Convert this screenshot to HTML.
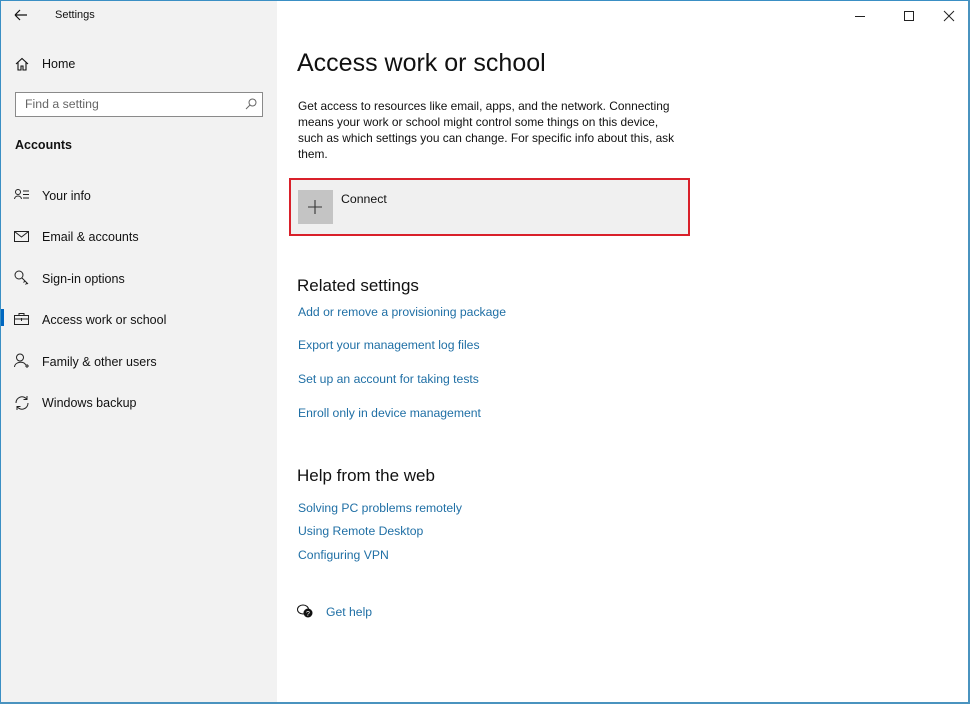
<!DOCTYPE html>
<html><head><meta charset="utf-8"><style>
*{margin:0;padding:0;box-sizing:border-box}
body{width:970px;height:704px;overflow:hidden;font-family:"Liberation Sans",sans-serif;background:#fff;position:relative;color:#000}
.side{position:absolute;left:0;top:0;width:277px;height:704px;background:#f2f2f2;border-left:1px solid #3a8fc4}
.a{position:absolute;white-space:nowrap}
.nav{font-size:12.5px;color:#111}
.lnk{font-size:12.2px;color:#1f6fa5}
svg{position:absolute}
</style></head><body>
<div class="side"></div>
<div class="a" style="left:0;top:0;width:970px;height:1px;background:#3a8fc4"></div>
<div class="a" style="left:968px;top:0;width:2px;height:704px;background:#4a93bf"></div>
<div class="a" style="left:0;top:702px;width:970px;height:2px;background:#4a93bf"></div>

<svg style="left:14px;top:9px" width="14" height="12"><path d="M1 6H13M1 6L6 1M1 6L6 11" stroke="#111" fill="none" stroke-width="1.2"/></svg>
<div class="a" style="left:55px;top:9px;font-size:11px;color:#111">Settings</div>

<svg style="left:15px;top:57px" width="14" height="14"><path d="M1 7L7 1.5L13 7M3 5.5V13H6V9H8V13H11V5.5" stroke="#111" fill="none" stroke-width="1.1"/></svg>
<div class="a nav" style="left:42px;top:57px">Home</div>

<div class="a" style="left:15px;top:92px;width:248px;height:25px;border:1px solid #8a8a8a;background:#fff"></div>
<div class="a" style="left:25px;top:97px;font-size:12.3px;color:#666">Find a setting</div>
<svg style="left:244px;top:97px" width="14" height="14"><circle cx="8.5" cy="5.5" r="3.5" stroke="#666" fill="none"/><path d="M6 8L2 12" stroke="#666"/></svg>

<div class="a" style="left:15px;top:138px;font-size:12.5px;font-weight:bold;color:#111">Accounts</div>

<svg style="left:14px;top:188px" width="16" height="14"><circle cx="4" cy="4" r="2.5" stroke="#222" fill="none"/><path d="M0.5 11C1 7 7 7 7.5 11M9 3H15M9 6.5H15M9 10H15" stroke="#222" fill="none"/></svg>
<div class="a nav" style="left:42px;top:189px">Your info</div>

<svg style="left:14px;top:231px" width="16" height="12"><rect x="0.5" y="0.5" width="14" height="10" stroke="#222" fill="none"/><path d="M0.5 0.5L7.5 6L14.5 0.5" stroke="#222" fill="none"/></svg>
<div class="a nav" style="left:42px;top:230px">Email &amp; accounts</div>

<svg style="left:14px;top:270px" width="16" height="16"><circle cx="5" cy="5" r="4" stroke="#222" fill="none"/><path d="M8 8L14 14M11 11L9.5 12.5M13 13L11.5 14.5" stroke="#222" fill="none"/></svg>
<div class="a nav" style="left:42px;top:272px">Sign-in options</div>

<div class="a" style="left:1px;top:309px;width:3px;height:17px;background:#0067c0"></div>
<svg style="left:14px;top:313px" width="16" height="12"><rect x="0.5" y="2.5" width="14" height="9" stroke="#222" fill="none"/><path d="M5 2.5V0.5H10V2.5M0.5 6H14.5M7.5 5V8" stroke="#222" fill="none"/></svg>
<div class="a nav" style="left:42px;top:313px">Access work or school</div>

<svg style="left:14px;top:353px" width="16" height="16"><circle cx="6" cy="4.5" r="3.5" stroke="#222" fill="none"/><path d="M0.5 14C1 8 11 8 11.5 12M13 11V15M11 13H15" stroke="#222" fill="none"/></svg>
<div class="a nav" style="left:42px;top:355px">Family &amp; other users</div>

<svg style="left:14px;top:395px" width="16" height="16"><path d="M2 8A6 6 0 0 1 13 4.5M14 8A6 6 0 0 1 3 11.5M13 1V4.5H9.5M3 15V11.5H6.5" stroke="#222" fill="none"/></svg>
<div class="a nav" style="left:42px;top:396px">Windows backup</div>

<svg style="left:855px;top:9px" width="100" height="14"><path d="M0 7.5H10" stroke="#222"/><rect x="49.5" y="2.5" width="9" height="9" stroke="#222" fill="none"/><path d="M89 2L99 12M99 2L89 12" stroke="#222"/></svg>

<div class="a" style="left:297px;top:49px;font-size:25px;color:#111;font-weight:300">Access work or school</div>
<div class="a" style="left:298px;top:98px;font-size:11.9px;line-height:16px;color:#111">Get access to resources like email, apps, and the network. Connecting<br>means your work or school might control some things on this device,<br>such as which settings you can change. For specific info about this, ask<br>them.</div>

<div class="a" style="left:289px;top:178px;width:401px;height:58px;border:2px solid #d9202a;background:#f0f0f0"></div>
<div class="a" style="left:298px;top:190px;width:35px;height:34px;background:#c4c4c4"></div>
<svg style="left:307px;top:199px" width="16" height="16"><path d="M8 1V15M1 8H15" stroke="#333" stroke-width="1.1"/></svg>
<div class="a" style="left:341px;top:192px;font-size:12.3px;color:#111">Connect</div>

<div class="a" style="left:297px;top:276px;font-size:17px;color:#111">Related settings</div>
<div class="a lnk" style="left:298px;top:305px">Add or remove a provisioning package</div>
<div class="a lnk" style="left:298px;top:338px">Export your management log files</div>
<div class="a lnk" style="left:298px;top:372px">Set up an account for taking tests</div>
<div class="a lnk" style="left:298px;top:406px">Enroll only in device management</div>

<div class="a" style="left:297px;top:466px;font-size:17px;color:#111">Help from the web</div>
<div class="a lnk" style="left:298px;top:501px">Solving PC problems remotely</div>
<div class="a lnk" style="left:298px;top:524px">Using Remote Desktop</div>
<div class="a lnk" style="left:298px;top:548px">Configuring VPN</div>

<svg style="left:297px;top:604px" width="18" height="16"><ellipse cx="6" cy="5.5" rx="5.5" ry="4.5" stroke="#111" fill="#fff"/><circle cx="11" cy="9" r="4.5" fill="#111"/><text x="11" y="12" font-size="7" fill="#fff" text-anchor="middle" font-family="Liberation Sans">?</text></svg>
<div class="a lnk" style="left:326px;top:605px">Get help</div>
</body></html>
